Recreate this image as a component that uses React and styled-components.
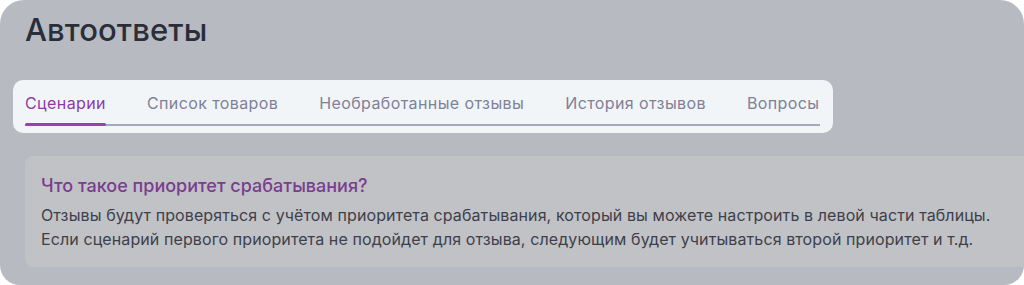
import styled, { createGlobalStyle } from "styled-components";

const GlobalStyle = createGlobalStyle`
  html, body {
    margin: 0;
    padding: 0;
    background: #ffffff;
  }
  body {
    font-family: "Inter", "Noto Sans", sans-serif;
  }
`;

const Panel = styled.div`
  width: 1024px;
  height: 285px;
  box-sizing: border-box;
  background-color: #b7bac1;
  border-radius: 24px 24px 20px 20px;
  overflow: hidden;
  padding: 10px 0 0 0;
`;

const Title = styled.h1`
  margin: 0 0 0 25px;
  font-size: 31px;
  line-height: 40px;
  font-weight: 500;
  color: #2a2e3a;
  letter-spacing: 0.1px;
`;

const TabBar = styled.div`
  display: inline-flex;
  margin: 30px 0 0 13px;
  padding: 0 13px 0 12px;
  height: 53px;
  box-sizing: border-box;
  background-color: #f2f5f8;
  border-radius: 10px;
`;

const TabList = styled.div`
  display: flex;
  gap: 41px;
  border-bottom: 2px solid #a7a9b6;
  height: 46px;
  box-sizing: border-box;
`;

const Tab = styled.div`
  position: relative;
  display: flex;
  align-items: center;
  font-size: 16px;
  letter-spacing: 0.4px;
  padding-top: 2px;
  color: ${(p) => (p.$active ? "#8d3aa6" : "#7e8197")};
  white-space: nowrap;

  &::after {
    content: "";
    display: ${(p) => (p.$active ? "block" : "none")};
    position: absolute;
    left: 0;
    right: 0;
    bottom: -2px;
    height: 3px;
    border-radius: 2px;
    background-color: #9a3fb4;
  }
`;

const InfoBox = styled.div`
  margin: 23px -20px 0 25px;
  padding: 17px 16px 16px 16px;
  background-color: #c1c2c6;
  border-radius: 8px;
`;

const InfoTitle = styled.div`
  font-size: 18px;
  line-height: 26px;
  font-weight: 500;
  color: #7a3d90;
  margin-bottom: 4px;
`;

const InfoText = styled.p`
  margin: 0;
  font-size: 16px;
  letter-spacing: 0.1px;
  line-height: 24px;
  color: #3d404a;
`;

const tabs = [
  "Сценарии",
  "Список товаров",
  "Необработанные отзывы",
  "История отзывов",
  "Вопросы",
];

export default function App() {
  return (
    <>
      <GlobalStyle />
      <Panel>
        <Title>Автоответы</Title>
        <TabBar>
          <TabList>
            {tabs.map((t, i) => (
              <Tab key={t} $active={i === 0}>
                {t}
              </Tab>
            ))}
          </TabList>
        </TabBar>
        <InfoBox>
          <InfoTitle>Что такое приоритет срабатывания?</InfoTitle>
          <InfoText>
            Отзывы будут проверяться с учётом приоритета срабатывания, который
            вы можете настроить в левой части таблицы.
            <br />
            Если сценарий первого приоритета не подойдет для отзыва, следующим
            будет учитываться второй приоритет и т.д.
          </InfoText>
        </InfoBox>
      </Panel>
    </>
  );
}
